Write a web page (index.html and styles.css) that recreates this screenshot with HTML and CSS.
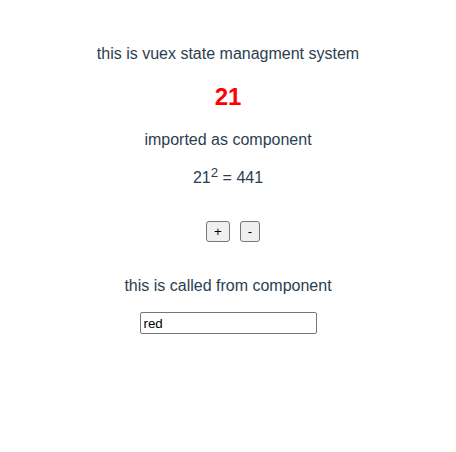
FILE: index.html
```html
<!DOCTYPE html>
<html>
<head>
<meta charset="utf-8">
<link rel="stylesheet" href="styles.css">
</head>
<body>
<div id="app">
  <p class="title">this is vuex state managment system</p>
  <h2 class="count">21</h2>
  <p>imported as component</p>
  <p>21<sup>2</sup> = 441</p>
  <div class="controls">
    <button class="btn">+</button>
    <button class="btn">-</button>
  </div>
  <p class="called">this is called from component</p>
  <input class="field" type="text" value="red">
</div>
</body>
</html>
```

FILE: styles.css
```css
body {
  margin: 0;
  background: #fff;
}
#app {
  font-family: "Liberation Sans", Arial, sans-serif;
  color: #2c3e50;
  text-align: center;
  padding-top: 45px;
  font-size: 16px;
}
#app p {
  margin: 16px 0;
}
#app p.title {
  margin-top: 0;
}
.count {
  color: #ff0000;
  font-size: 24px;
  font-weight: bold;
  margin: 20px 0;
}
.controls {
  display: flex;
  justify-content: center;
  gap: 10px;
  margin-top: 34px;
  padding-left: 10px;
}
.btn {
  font-family: "Liberation Sans", Arial, sans-serif;
  font-size: 13.33px;
  height: 21px;
  padding: 0 7px;
  border: 1px solid #767676;
  border-radius: 3px;
  background: #efefef;
  color: #000;
}
#app p.called {
  margin-top: 35px;
  margin-bottom: 17px;
}
.field {
  box-sizing: border-box;
  font-family: "Liberation Sans", Arial, sans-serif;
  font-size: 13.33px;
  width: 177px;
  height: 22px;
  padding: 1px 3px;
  border: 1px solid #767676;
  border-radius: 2px;
  color: #000;
}
```
